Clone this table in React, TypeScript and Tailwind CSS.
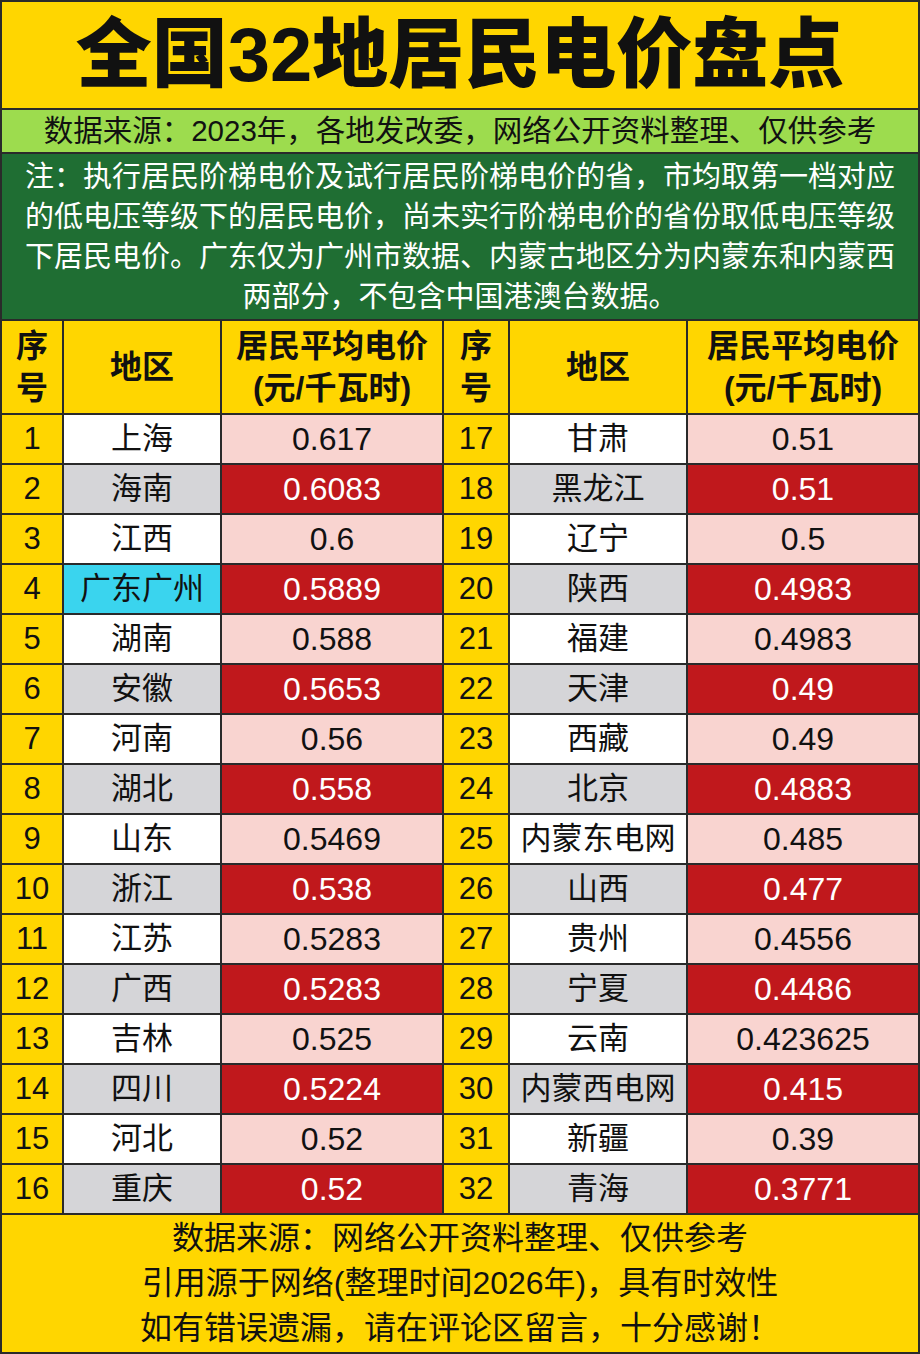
const left: [string, string, string][] = [
  ["1", "上海", "0.617"],
  ["2", "海南", "0.6083"],
  ["3", "江西", "0.6"],
  ["4", "广东广州", "0.5889"],
  ["5", "湖南", "0.588"],
  ["6", "安徽", "0.5653"],
  ["7", "河南", "0.56"],
  ["8", "湖北", "0.558"],
  ["9", "山东", "0.5469"],
  ["10", "浙江", "0.538"],
  ["11", "江苏", "0.5283"],
  ["12", "广西", "0.5283"],
  ["13", "吉林", "0.525"],
  ["14", "四川", "0.5224"],
  ["15", "河北", "0.52"],
  ["16", "重庆", "0.52"],
];

const right: [string, string, string][] = [
  ["17", "甘肃", "0.51"],
  ["18", "黑龙江", "0.51"],
  ["19", "辽宁", "0.5"],
  ["20", "陕西", "0.4983"],
  ["21", "福建", "0.4983"],
  ["22", "天津", "0.49"],
  ["23", "西藏", "0.49"],
  ["24", "北京", "0.4883"],
  ["25", "内蒙东电网", "0.485"],
  ["26", "山西", "0.477"],
  ["27", "贵州", "0.4556"],
  ["28", "宁夏", "0.4486"],
  ["29", "云南", "0.423625"],
  ["30", "内蒙西电网", "0.415"],
  ["31", "新疆", "0.39"],
  ["32", "青海", "0.3771"],
];

const cell = "flex items-center justify-center";

function HeaderCells() {
  return (
    <>
      <div className={`${cell} flex-col bg-[#ffd600] text-[32px] font-bold leading-[42px]`}>
        <span>序</span>
        <span>号</span>
      </div>
      <div className={`${cell} bg-[#ffd600] text-[32px] font-bold`}>地区</div>
      <div className={`${cell} flex-col bg-[#ffd600] text-[32px] font-bold leading-[42px]`}>
        <span>居民平均电价</span>
        <span>(元/千瓦时)</span>
      </div>
    </>
  );
}

function RowCells({ row, i }: { row: [string, string, string]; i: number }) {
  const odd = i % 2 === 0;
  const regionBg = row[1] === "广东广州" ? "bg-[#3ad4ee]" : odd ? "bg-white" : "bg-[#d5d5d8]";
  return (
    <>
      <div className={`${cell} bg-[#ffd600] text-[31px]`}>{row[0]}</div>
      <div className={`${cell} ${regionBg} text-[31px]`}>{row[1]}</div>
      <div
        className={`${cell} text-[32px] ${odd ? "bg-[#f9d4d0] text-[#111]" : "bg-[#c0181c] text-white"}`}
      >
        {row[2]}
      </div>
    </>
  );
}

function RowGroup({ l, r, i }: { l: [string, string, string]; r: [string, string, string]; i: number }) {
  return (
    <>
      <RowCells row={l} i={i} />
      <RowCells row={r} i={i} />
    </>
  );
}

export default function App() {
  return (
    <div className="w-[920px] h-[1354px] bg-[#2a2a2a] p-[2px] flex flex-col gap-[2px] text-[#111] font-['Liberation_Sans','Noto_Sans_CJK_SC',sans-serif]">
      <div className="h-[106px] bg-[#ffd600] flex items-center justify-center">
        <h1 className="text-[76px] font-black leading-none">全国32地居民电价盘点</h1>
      </div>

      <div className="h-[42px] bg-[#9ddc4e] flex items-center justify-center text-[29.5px]">
        数据来源：2023年，各地发改委，网络公开资料整理、仅供参考
      </div>

      <div className="h-[165px] bg-[#1f6e33] text-white text-[29px] leading-[40px] flex flex-col items-center justify-center">
        <div>注：执行居民阶梯电价及试行居民阶梯电价的省，市均取第一档对应</div>
        <div>的低电压等级下的居民电价，尚未实行阶梯电价的省份取低电压等级</div>
        <div>下居民电价。广东仅为广州市数据、内蒙古地区分为内蒙东和内蒙西</div>
        <div>两部分，不包含中国港澳台数据。</div>
      </div>

      <div className="grid grid-cols-[60px_156px_220px_64px_176px_1fr] grid-rows-[92px_repeat(16,48px)] gap-[2px]">
        <HeaderCells />
        <HeaderCells />
        {left.map((row, i) => (
          <RowGroup key={row[0]} l={row} r={right[i]} i={i} />
        ))}
      </div>

      <div className="flex-1 bg-[#ffd600] flex flex-col items-center justify-center text-[32px] leading-[45px]">
        <div>数据来源：网络公开资料整理、仅供参考</div>
        <div>引用源于网络(整理时间2026年)，具有时效性</div>
        <div>如有错误遗漏，请在评论区留言，十分感谢！</div>
      </div>
    </div>
  );
}
